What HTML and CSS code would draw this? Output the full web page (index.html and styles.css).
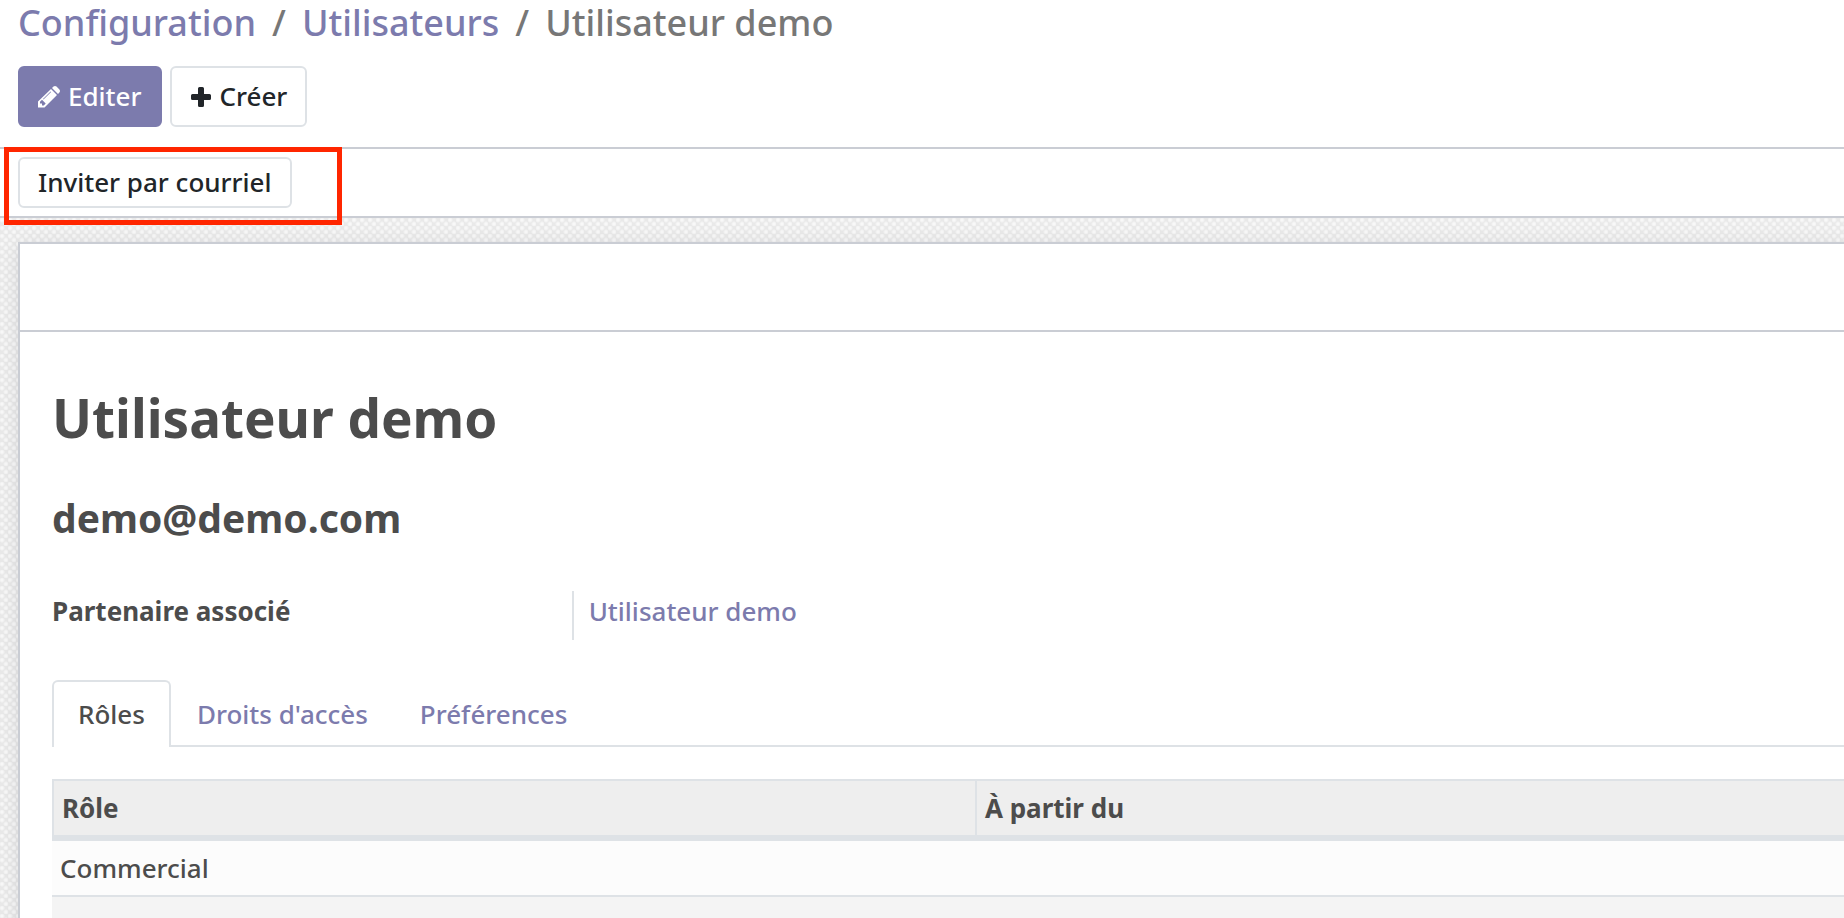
FILE: index.html
```html
<!DOCTYPE html>
<html lang="fr">
<head>
    <meta charset="utf-8"/>
    <title>Utilisateur demo</title>
    <link rel="stylesheet" href="styles.css">
</head>
<body>
<header class="control-panel">
    <nav class="breadcrumb">
        <a href="#">Configuration</a>
        <span class="separator">/</span>
        <a href="#">Utilisateurs</a>
        <span class="separator">/</span>
        <span>Utilisateur demo</span>
    </nav>
    <div class="buttons">
        <button class="btn btn-primary" type="button">
            <svg class="icon" viewBox="0 0 22 22">
                <path fill="currentColor" fill-rule="evenodd" d="M13 3 19 9 6.500 21.500H0V15.500ZM4 13.800 2 15.800V17.500H4V19.500H5.800L7.700 17.500ZM12.600 5.500 5 13.100 5.500 13.600 13.100 6ZM14 2 15.500 .6Q17 -.6 18.500 .6L21.400 3.500Q22.600 5 21.400 6.500L20 8Z"/>
            </svg>
            Editer
        </button>
        <button class="btn" type="button">
            <svg class="icon" viewBox="0 0 22 22">
                <path fill="currentColor" d="M9.500 1h3q1.500 0 1.500 1.500V8h5.500Q21 8 21 9.500v3q0 1.500-1.500 1.500H14v5.500q0 1.500-1.500 1.500h-3Q8 21 8 19.500V14H2.500Q1 14 1 12.500v-3Q1 8 2.500 8H8V2.500Q8 1 9.500 1z"/>
            </svg>
            Créer
        </button>
    </div>
</header>

<div class="statusbar">
    <button class="btn btn-sm" type="button">Inviter par courriel</button>
    <div class="highlight"></div>
</div>

<main class="form-view">
    <div class="sheet">
        <div class="button-box"></div>
        <div class="sheet-body">
            <h1>Utilisateur demo</h1>
            <h2>demo@demo.com</h2>

            <div class="group">
                <span class="label">Partenaire associé</span>
                <div class="value"><a href="#">Utilisateur demo</a></div>
            </div>

            <nav class="tabs">
                <a class="tab active" href="#">Rôles</a>
                <a class="tab" href="#">Droits d'accès</a>
                <a class="tab" href="#">Préférences</a>
            </nav>

            <table class="list">
                <thead>
                <tr>
                    <th class="col-role">Rôle</th>
                    <th>À partir du</th>
                </tr>
                </thead>
                <tbody>
                <tr>
                    <td>Commercial</td>
                    <td></td>
                </tr>
                <tr>
                    <td></td>
                    <td></td>
                </tr>
                </tbody>
            </table>
        </div>
    </div>
</main>
</body>
</html>
```
FILE: styles.css
```css
* {
    box-sizing: border-box;
}

body {
    margin: 0;
    height: 100vh;
    overflow: hidden;
    display: flex;
    flex-direction: column;
    background: #fff;
    color: #4c4c4c;
    font-family: "Lucida Grande", "Noto Sans", sans-serif;
    font-size: 26px;
    font-weight: 500;
    line-height: 40px;
}

a {
    color: #7c7bad;
    text-decoration: none;
}

/* Control panel */
.control-panel {
    padding: 0 18px 20px;
    border-bottom: 2px solid #cacdd4;
}

.breadcrumb {
    display: flex;
    gap: 16px;
    font-size: 36px;
    line-height: 46px;
    color: #777;
}

.buttons {
    display: flex;
    gap: 8px;
    margin-top: 20px;
}

.btn {
    display: flex;
    align-items: center;
    gap: 8px;
    padding: 9px 18px;
    border: 2px solid #dee2e6;
    border-radius: 6px;
    background: #fff;
    color: #212529;
    font: inherit;
    line-height: 39px;
}

.btn-primary {
    border-color: #7c7bad;
    background: #7c7bad;
    color: #fff;
}

.btn-sm {
    padding: 4px 18px;
}

.icon {
    width: 22px;
    height: 22px;
}

/* Status bar */
.statusbar {
    position: relative;
    display: flex;
    padding: 8px 18px;
    border-bottom: 2px solid #cacdd4;
}

.highlight {
    position: absolute;
    z-index: 1;
    top: -2px;
    left: 4px;
    width: 338px;
    height: 78px;
    border: 5px solid #ff2600;
}

/* Form */
.form-view {
    flex: 1;
    min-height: 0;
    padding: 24px 0 0 18px;
    background-color: #e9e9e9;
    background-image:
        radial-gradient(circle at 2px 2px, #f8f8f8 1px, transparent 3px),
        radial-gradient(circle at 6px 6px, #f8f8f8 1px, transparent 3px);
    background-size: 8px 8px;
}

.sheet {
    border: 2px solid #cacdd4;
    border-right: 0;
    background: #fff;
    box-shadow: 0 4px 20px rgba(0, 0, 40, .1);
}

.button-box {
    height: 88px;
    border-bottom: 2px solid #cacdd4;
}

.sheet-body {
    padding: 54px 0 0 32px;
}

h1 {
    margin: 0 0 44px;
    font-size: 53px;
    line-height: 64px;
}

h2 {
    margin: 0 0 49px;
    font-size: 39px;
    line-height: 48px;
}

.group {
    display: flex;
    margin-bottom: 40px;
}

.label {
    width: 29%;
    font-weight: bold;
}

.value {
    flex: 1;
    padding: 0 0 9px 15px;
    border-left: 2px solid #dee2e6;
}

/* Tabs */
.tabs {
    display: flex;
    border-bottom: 2px solid #dee2e6;
}

.tab {
    margin-bottom: -2px;
    padding: 12px 24px;
    border: 2px solid transparent;
    border-bottom: 0;
}

.tab.active {
    padding-bottom: 13px;
    border-color: #dee2e6;
    border-radius: 6px 6px 0 0;
    background: #fff;
    color: #4c4c4c;
}

/* List */
.list {
    width: 100%;
    margin-top: 32px;
    border-collapse: separate;
    border-spacing: 0;
    table-layout: fixed;
}

.list th {
    padding: 7px 8px;
    border: 2px solid #dee2e6;
    border-width: 2px 0 6px 2px;
    background: #eee;
    text-align: left;
}

.col-role {
    width: 51.5%;
}

.list td {
    height: 56px;
    padding: 7px 8px;
    border-bottom: 2px solid #dee2e6;
    background: #fcfcfc;
}

.list tr:nth-child(even) td {
    background: #f4f4f4;
}
```
